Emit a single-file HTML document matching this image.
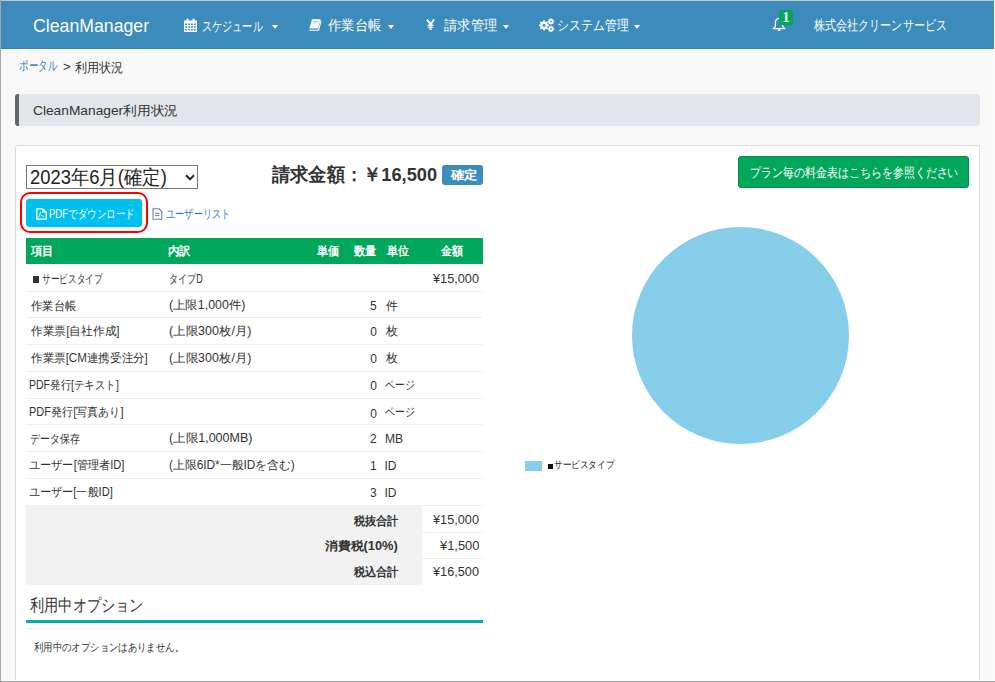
<!DOCTYPE html>
<html lang="ja">
<head>
<meta charset="utf-8">
<style>
*{box-sizing:border-box;margin:0;padding:0}
html,body{width:995px;height:682px;overflow:hidden}
body{font-family:"Liberation Sans",sans-serif;background:#f9f9f9;position:relative;color:#333}
.a{position:absolute}
.t{position:absolute;white-space:nowrap;transform-origin:0 0}
.caret{position:absolute;width:0;height:0;border-left:3.5px solid transparent;border-right:3.5px solid transparent;border-top:4px solid #fff}
/*MEASURE*/
</style>
</head>
<body>
<div class="a" style="left:1px;top:1px;width:993px;height:48px;background:#3c8bbb;border-bottom:1px solid #3582b2"></div>
<svg class="a" style="left:183.8px;top:18.3px" width="13" height="14" viewBox="0 0 13 14">
  <path fill="#fff" d="M0 2.5h13V14H0z"/>
  <rect x="2.5" y="0.5" width="2" height="3" rx="1" fill="#fff"/>
  <rect x="8.5" y="0.5" width="2" height="3" rx="1" fill="#fff"/>
  <g fill="#3c8bbb">
    <rect x="1.3" y="5.5" width="1.8" height="1.6"/><rect x="4.3" y="5.5" width="1.8" height="1.6"/><rect x="7.1" y="5.5" width="1.8" height="1.6"/><rect x="9.9" y="5.5" width="1.8" height="1.6"/>
    <rect x="1.3" y="8.2" width="1.8" height="1.6"/><rect x="4.3" y="8.2" width="1.8" height="1.6"/><rect x="7.1" y="8.2" width="1.8" height="1.6"/><rect x="9.9" y="8.2" width="1.8" height="1.6"/>
    <rect x="1.3" y="10.9" width="1.8" height="1.6"/><rect x="4.3" y="10.9" width="1.8" height="1.6"/><rect x="7.1" y="10.9" width="1.8" height="1.6"/><rect x="9.9" y="10.9" width="1.8" height="1.6"/>
  </g>
</svg>
<div class="caret" style="left:272px;top:25px"></div>
<svg class="a" style="left:307.5px;top:19.3px" width="14" height="12" viewBox="0 0 14 12">
  <path fill="#fff" d="M4 .3h8.6L10.1 9.6H1.4z"/>
  <path fill="none" stroke="#fff" stroke-width="1.1" d="M13.1 1.6l-2.5 9.6H1.3"/>
  <path fill="none" stroke="#3c8bbb" stroke-width=".9" opacity=".45" d="M5.2 2.4h5.6M4.8 3.9h5.6"/>
</svg>
<div class="caret" style="left:388px;top:25px"></div>
<svg class="a" style="left:426px;top:19px" width="9" height="11" viewBox="0 0 9 11">
  <path fill="none" stroke="#fff" stroke-width="2" d="M1 .6L4.5 5.4L8 .6M4.5 5.2V11"/>
  <path fill="none" stroke="#fff" stroke-width="1.1" d="M1.5 6.1h6M1.5 8.2h6"/>
</svg>
<div class="caret" style="left:503px;top:25px"></div>
<svg class="a" style="left:539px;top:18px" width="16" height="15" viewBox="0 0 16 15">
  <g fill="#fff">
    <circle cx="5" cy="7.3" r="3.9"/>
    <g stroke="#fff" stroke-width="1.6"><path d="M5 2.2v10.2M-0.1 7.3h10.2M1.4 3.7l7.2 7.2M1.4 10.9l7.2-7.2"/></g>
    <circle cx="12" cy="3.4" r="2.5"/><circle cx="12" cy="10.9" r="2.5"/>
    <g stroke="#fff" stroke-width="1.1">
      <path d="M12 0.2v6.4M8.8 3.4h6.4M9.8 1.2l4.4 4.4M9.8 5.6l4.4-4.4"/>
      <path d="M12 7.7v6.4M8.8 10.9h6.4M9.8 8.7l4.4 4.4M9.8 13.1l4.4-4.4"/>
    </g>
  </g>
  <circle cx="5" cy="7.3" r="1.5" fill="#3c8bbb"/><circle cx="12" cy="3.4" r="0.9" fill="#3c8bbb"/><circle cx="12" cy="10.9" r="0.9" fill="#3c8bbb"/>
</svg>
<div class="caret" style="left:634px;top:25px"></div>
<svg class="a" style="left:771px;top:16px" width="16" height="16" viewBox="0 0 16 16">
  <path fill="none" stroke="#fff" stroke-width="1.2" d="M8 2.5c-2.6 0-3.6 2.2-3.6 4.4v2.8c0 1.3-1.2 2.4-2.6 3h12.4c-1.4-.6-2.6-1.7-2.6-3V6.9c0-2.2-1-4.4-3.6-4.4z"/>
  <path fill="#fff" d="M6.5 13.5h3c0 1-.7 1.5-1.5 1.5s-1.5-.5-1.5-1.5z"/>
</svg>
<div class="a" style="left:779px;top:10px;width:14px;height:15px;background:#00a65a;border-radius:3px;color:#fff;font:bold 14px/15px 'Liberation Serif',serif;text-align:center">1</div>
<div class="a" style="left:15px;top:94px;width:965px;height:32px;background:#e2e5ea;border-left:4px solid #666;border-radius:3px"></div>
<div class="a" style="left:15px;top:145px;width:965px;height:560px;background:#fff;border:1px solid #dcdcdc;border-radius:3px"></div>
<div class="a" style="left:26px;top:165px;width:172px;height:24px;border:1px solid #767676;background:#fff"></div>
<svg class="a" style="left:185px;top:174px" width="10" height="7" viewBox="0 0 10 7"><path d="M1 1.2l4 4 4-4" fill="none" stroke="#2a2a2a" stroke-width="2.1"/></svg>
<div class="a" style="left:442px;top:165px;width:41px;height:20px;background:#3c8dbc;border-radius:3px"></div>
<div class="a" style="left:20px;top:192px;width:128px;height:41px;border:2.4px solid #ff0000;border-radius:10px"></div>
<div class="a" style="left:26px;top:199px;width:116px;height:28px;background:#00c0ef;border-radius:3px"></div>
<svg class="a" style="left:36px;top:208px" width="11" height="12" viewBox="0 0 11 12">
  <path fill="none" stroke="#fff" stroke-width="1.3" d="M.8 .8h5.6l3.8 3.6v6.8H.8z"/>
  <path fill="#fff" d="M6 .8h1l3.2 3v1H6z" opacity=".9"/>
  <path fill="none" stroke="#fff" stroke-width=".9" d="M1.6 10.2c1.3-1.6 2.6-3.6 3-6.4M4.3 6.6c.8 1 1.9 1.6 3.6 1.6"/>
</svg>
<svg class="a" style="left:152px;top:208px" width="11" height="12" viewBox="0 0 11 12">
  <path fill="none" stroke="#6f7fb8" stroke-width="1.1" d="M1 .8h6l2.8 2.8v7.6H1z"/>
  <path stroke="#6f7fb8" stroke-width="1" d="M3 5.3h4.5M3 7.6h4.5"/>
</svg>
<div class="a" style="left:26px;top:238px;width:457px;height:26px;background:#00a65a"></div>
<div class="a" style="left:26px;top:291px;width:457px;height:1px;background:#efefef"></div>
<div class="a" style="left:26px;top:317px;width:457px;height:1px;background:#efefef"></div>
<div class="a" style="left:26px;top:344px;width:457px;height:1px;background:#efefef"></div>
<div class="a" style="left:26px;top:371px;width:457px;height:1px;background:#efefef"></div>
<div class="a" style="left:26px;top:398px;width:457px;height:1px;background:#efefef"></div>
<div class="a" style="left:26px;top:424px;width:457px;height:1px;background:#efefef"></div>
<div class="a" style="left:26px;top:451px;width:457px;height:1px;background:#efefef"></div>
<div class="a" style="left:26px;top:478px;width:457px;height:1px;background:#efefef"></div>
<div class="a" style="left:26px;top:505px;width:396px;height:80px;background:#f2f2f2"></div>
<div class="a" style="left:422px;top:505px;width:61px;height:1px;background:#efefef"></div>
<div class="a" style="left:26px;top:532px;width:396px;height:1px;background:#f5f5f5"></div>
<div class="a" style="left:26px;top:558px;width:396px;height:1px;background:#f5f5f5"></div>
<div class="a" style="left:422px;top:532px;width:61px;height:1px;background:#efefef"></div>
<div class="a" style="left:422px;top:558px;width:61px;height:1px;background:#efefef"></div>
<div class="a" style="left:26px;top:620px;width:457px;height:3px;background:#00adb1"></div>
<div class="a" style="left:26px;top:628px;width:457px;height:1px;background:#eee"></div>
<div class="a" style="left:738px;top:156px;width:231px;height:32px;background:#00a65a;border-radius:3px;border:1px solid #008d4c"></div>
<div class="a" style="left:632px;top:227px;width:217px;height:217px;border-radius:50%;background:#87ceeb"></div>
<div class="a" style="left:525px;top:461px;width:17px;height:10px;background:#87ceeb"></div>
<div class="a" style="left:0;top:680px;width:995px;height:1px;background:#fdfdfd"></div>
<div class="a" style="left:0;top:0;width:995px;height:1px;background:#c8c4c4"></div>
<div class="a" style="left:0;top:0;width:1px;height:682px;background:#a8a8a8"></div>
<div class="a" style="left:0;top:681px;width:995px;height:1px;background:#9a9a9a"></div>
<div class="a" style="left:994px;top:1px;width:1px;height:680px;background:#fff"></div>
<div class="a" style="left:33px;top:276px;width:6px;height:6.5px;background:#333"></div>
<div class="a" style="left:547.5px;top:463.5px;width:5px;height:5px;background:#111"></div>

<div class="t" id="brand" style="left:33.02px;top:16.10px;font-size:18px;line-height:20px;color:#fff;transform:scaleX(0.9829);--w:116.06">CleanManager</div>
<div class="t" id="n1" style="left:202.28px;top:17.90px;font-size:14px;line-height:16px;color:#fff;transform:scaleX(0.7229);--w:60.72">スケジュール</div>
<div class="t" id="n2" style="left:328.00px;top:16.85px;font-size:14px;line-height:16px;color:#fff;transform:scaleX(0.9468);--w:53.02">作業台帳</div>
<div class="t" id="n3" style="left:444.00px;top:16.85px;font-size:14px;line-height:16px;color:#fff;transform:scaleX(0.9478);--w:53.08">請求管理</div>
<div class="t" id="n4" style="left:557.23px;top:16.85px;font-size:14px;line-height:16px;color:#fff;transform:scaleX(0.8500);--w:71.40">システム管理</div>
<div class="t" id="n5" style="left:814.00px;top:16.70px;font-size:14px;line-height:16px;color:#fff;transform:scaleX(0.7904);--w:132.79">株式会社クリーンサービス</div>
<div class="t" id="c1" style="left:18.97px;top:58.40px;font-size:13px;line-height:15px;color:#3176b6;transform:scaleX(0.7313);--w:38.03">ポータル</div>
<div class="t" id="c2" style="left:62.91px;top:59.30px;font-size:13px;line-height:15px;color:#333;--w:7.59">&gt;</div>
<div class="t" id="c3" style="left:75.25px;top:60.20px;font-size:13px;line-height:15px;color:#333;transform:scaleX(0.9319);--w:48.46">利用状況</div>
<div class="t" id="title" style="left:33.00px;top:102.70px;font-size:13px;line-height:15px;color:#333;transform:scaleX(1.0570);--w:145.11">CleanManager利用状況</div>
<div class="t" id="sel" style="left:30.08px;top:165.50px;font-size:20px;line-height:22px;color:#222;transform:scaleX(0.9184);--w:136.78">2023年6月(確定)</div>
<div class="t" id="amt" style="left:271.56px;top:164.10px;font-size:19px;line-height:21px;color:#333;font-weight:bold;transform:scaleX(0.9591);--w:165.09">請求金額：￥16,500</div>
<div class="t" id="kak" style="left:450.82px;top:167.70px;font-size:12px;line-height:14px;color:#fff;font-weight:bold;transform:scaleX(1.1200);--w:26.88">確定</div>
<div class="t" id="pdf" style="left:49.21px;top:206.80px;font-size:12px;line-height:14px;color:#fff;transform:scaleX(0.7929);--w:85.63">PDFでダウンロード</div>
<div class="t" id="ul" style="left:165.98px;top:206.80px;font-size:12px;line-height:14px;color:#3176b6;transform:scaleX(0.7656);--w:64.31">ユーザーリスト</div>
<div class="t" id="h1" style="left:30.94px;top:243.80px;font-size:12px;line-height:14px;color:#fff;font-weight:bold;transform:scaleX(0.9416);--w:22.60">項目</div>
<div class="t" id="h2" style="left:168.39px;top:243.80px;font-size:12px;line-height:14px;color:#fff;font-weight:bold;transform:scaleX(0.9552);--w:22.92">内訳</div>
<div class="t" id="h3" style="left:317.47px;top:243.80px;font-size:12px;line-height:14px;color:#fff;font-weight:bold;transform:scaleX(0.9311);--w:22.35">単価</div>
<div class="t" id="h4" style="left:353.81px;top:243.80px;font-size:12px;line-height:14px;color:#fff;font-weight:bold;transform:scaleX(0.9416);--w:22.60">数量</div>
<div class="t" id="h5" style="left:386.75px;top:243.80px;font-size:12px;line-height:14px;color:#fff;font-weight:bold;transform:scaleX(0.9217);--w:22.12">単位</div>
<div class="t" id="h6" style="left:441.43px;top:243.80px;font-size:12px;line-height:14px;color:#fff;font-weight:bold;transform:scaleX(0.9217);--w:22.12">金額</div>
<div class="t" id="r0a" style="left:41.50px;top:272.00px;font-size:12px;line-height:14px;color:#333;transform:scaleX(0.7211);--w:60.57">サービスタイプ</div>
<div class="t" id="r0b" style="left:169.24px;top:272.00px;font-size:12px;line-height:14px;color:#333;transform:scaleX(0.7578);--w:33.85">タイプD</div>
<div class="t" id="r1a" style="left:31.20px;top:298.80px;font-size:12px;line-height:14px;color:#333;transform:scaleX(0.9420);--w:45.22">作業台帳</div>
<div class="t" id="r1b" style="left:168.99px;top:298.30px;font-size:12px;line-height:14px;color:#333;transform:scaleX(1.0301);--w:76.26">(上限1,000件)</div>
<div class="t" id="r1n" style="left:370.10px;top:299.30px;font-size:12px;line-height:14px;color:#333">5</div>
<div class="t" id="r1u" style="left:385.62px;top:298.80px;font-size:12px;line-height:14px;color:#333">件</div>
<div class="t" id="r2a" style="left:31.20px;top:324.10px;font-size:12px;line-height:14px;color:#333;transform:scaleX(0.9757);--w:88.47">作業票[自社作成]</div>
<div class="t" id="r2b" style="left:168.99px;top:323.60px;font-size:12px;line-height:14px;color:#333;transform:scaleX(1.0396);--w:82.50">(上限300枚/月)</div>
<div class="t" id="r2n" style="left:370.19px;top:325.10px;font-size:12px;line-height:14px;color:#333">0</div>
<div class="t" id="r2u" style="left:385.62px;top:323.60px;font-size:12px;line-height:14px;color:#333">枚</div>
<div class="t" id="r3a" style="left:31.20px;top:350.90px;font-size:12px;line-height:14px;color:#333;transform:scaleX(0.9629);--w:116.84">作業票[CM連携受注分]</div>
<div class="t" id="r3b" style="left:168.99px;top:351.40px;font-size:12px;line-height:14px;color:#333;transform:scaleX(1.0396);--w:82.50">(上限300枚/月)</div>
<div class="t" id="r3n" style="left:370.19px;top:351.90px;font-size:12px;line-height:14px;color:#333">0</div>
<div class="t" id="r3u" style="left:385.62px;top:351.40px;font-size:12px;line-height:14px;color:#333">枚</div>
<div class="t" id="r4a" style="left:29.41px;top:377.70px;font-size:12px;line-height:14px;color:#333;transform:scaleX(0.8758);--w:89.92">PDF発行[テキスト]</div>
<div class="t" id="r4n" style="left:370.19px;top:378.70px;font-size:12px;line-height:14px;color:#333">0</div>
<div class="t" id="r4u" style="left:384.60px;top:378.20px;font-size:12px;line-height:14px;color:#333;transform:scaleX(0.8246);--w:29.69">ページ</div>
<div class="t" id="r5a" style="left:29.41px;top:404.50px;font-size:12px;line-height:14px;color:#333;transform:scaleX(0.9199);--w:94.45">PDF発行[写真あり]</div>
<div class="t" id="r5n" style="left:370.19px;top:406.50px;font-size:12px;line-height:14px;color:#333">0</div>
<div class="t" id="r5u" style="left:384.60px;top:405.00px;font-size:12px;line-height:14px;color:#333;transform:scaleX(0.8246);--w:29.69">ページ</div>
<div class="t" id="r6a" style="left:29.61px;top:431.80px;font-size:12px;line-height:14px;color:#333;transform:scaleX(0.8276);--w:49.66">データ保存</div>
<div class="t" id="r6b" style="left:168.57px;top:430.80px;font-size:12px;line-height:14px;color:#333;transform:scaleX(1.0434);--w:83.50">(上限1,000MB)</div>
<div class="t" id="r6n" style="left:370.10px;top:432.30px;font-size:12px;line-height:14px;color:#333">2</div>
<div class="t" id="r6u" style="left:384.52px;top:432.30px;font-size:12px;line-height:14px;color:#333;transform:scaleX(1.0035);--w:18.06">MB</div>
<div class="t" id="r7a" style="left:29.41px;top:458.10px;font-size:12px;line-height:14px;color:#333;transform:scaleX(0.9297);--w:95.45">ユーザー[管理者ID]</div>
<div class="t" id="r7b" style="left:168.59px;top:457.60px;font-size:12px;line-height:14px;color:#333;transform:scaleX(0.9876);--w:125.76">(上限6ID*一般IDを含む)</div>
<div class="t" id="r7n" style="left:370.10px;top:459.10px;font-size:12px;line-height:14px;color:#333">1</div>
<div class="t" id="r7u" style="left:384.46px;top:459.10px;font-size:12px;line-height:14px;color:#333;--w:12.00">ID</div>
<div class="t" id="r8a" style="left:29.41px;top:484.90px;font-size:12px;line-height:14px;color:#333;transform:scaleX(0.9237);--w:83.75">ユーザー[一般ID]</div>
<div class="t" id="r8n" style="left:370.10px;top:485.90px;font-size:12px;line-height:14px;color:#333">3</div>
<div class="t" id="r8u" style="left:384.46px;top:485.90px;font-size:12px;line-height:14px;color:#333;--w:12.00">ID</div>
<div class="t" id="r0v" style="left:432.60px;top:272.30px;font-size:12px;line-height:14px;color:#333;transform:scaleX(1.0600);--w:45.99">¥15,000</div>
<div class="t" id="s1l" style="left:353.59px;top:513.50px;font-size:12px;line-height:14px;color:#333;font-weight:bold;transform:scaleX(0.9297);--w:44.63">税抜合計</div>
<div class="t" id="s2l" style="left:325.21px;top:538.90px;font-size:12px;line-height:14px;color:#333;font-weight:bold;transform:scaleX(1.0708);--w:72.83">消費税(10%)</div>
<div class="t" id="s3l" style="left:353.59px;top:565.10px;font-size:12px;line-height:14px;color:#333;font-weight:bold;transform:scaleX(0.9297);--w:44.63">税込合計</div>
<div class="t" id="s1v" style="left:432.60px;top:513.30px;font-size:12px;line-height:14px;color:#333;transform:scaleX(1.0600);--w:45.99">¥15,000</div>
<div class="t" id="s2v" style="left:439.63px;top:539.40px;font-size:12px;line-height:14px;color:#333;transform:scaleX(1.0716);--w:39.33">¥1,500</div>
<div class="t" id="s3v" style="left:432.60px;top:565.10px;font-size:12px;line-height:14px;color:#333;transform:scaleX(1.0600);--w:45.99">¥16,500</div>
<div class="t" id="oh" style="left:30.00px;top:595.80px;font-size:17px;line-height:19px;color:#333;transform:scaleX(0.8349);--w:113.55">利用中オプション</div>
<div class="t" id="ot" style="left:33.99px;top:640.50px;font-size:11px;line-height:13px;color:#333;transform:scaleX(0.8521);--w:149.97">利用中のオプションはありません。</div>
<div class="t" id="plan" style="left:749.89px;top:165.30px;font-size:13px;line-height:15px;color:#fff;transform:scaleX(0.8439);--w:208.44">プラン毎の料金表はこちらを参照ください</div>
<div class="t" id="leg" style="left:553.67px;top:459.30px;font-size:10px;line-height:12px;color:#222;transform:scaleX(0.8623);--w:60.36">サービスタイプ</div>
<script>
(function(){var L=document.querySelectorAll('.t');for(var i=0;i<L.length;i++){var e=L[i];var w=parseFloat(e.style.getPropertyValue('--w'));if(!w)continue;e.style.transform='none';var r=e.getBoundingClientRect().width;if(r>0)e.style.transform='scaleX('+(w/r).toFixed(4)+')';}})();
</script>
</body>
</html>
